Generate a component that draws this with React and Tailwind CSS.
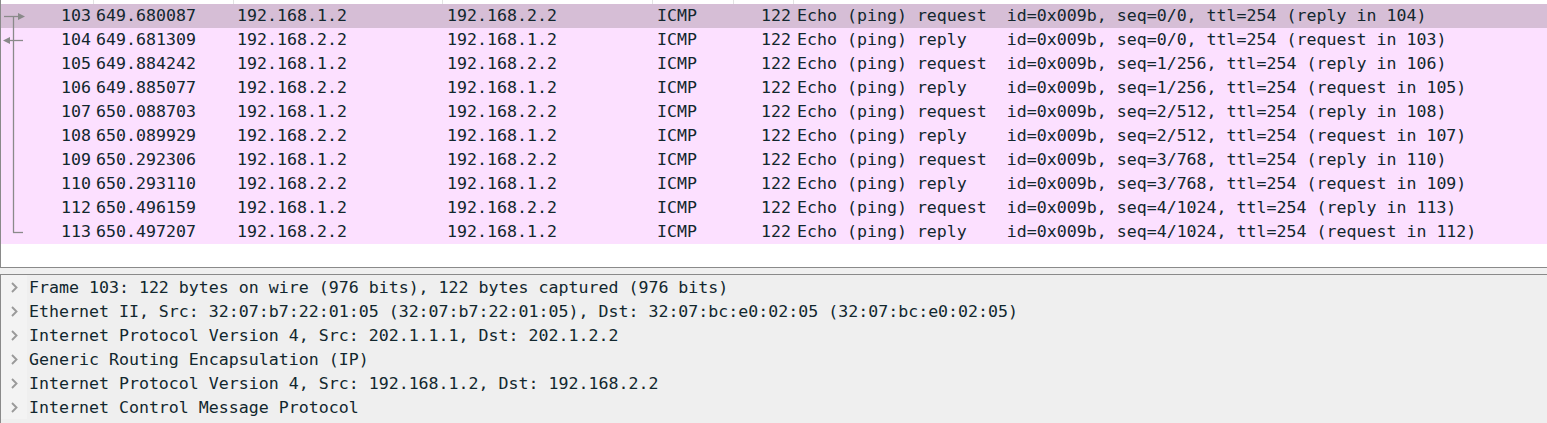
const packets = [
  { no: 103, time: '649.680087', src: '192.168.1.2', dst: '192.168.2.2', info: 'Echo (ping) request  id=0x009b, seq=0/0, ttl=254 (reply in 104)' },
  { no: 104, time: '649.681309', src: '192.168.2.2', dst: '192.168.1.2', info: 'Echo (ping) reply    id=0x009b, seq=0/0, ttl=254 (request in 103)' },
  { no: 105, time: '649.884242', src: '192.168.1.2', dst: '192.168.2.2', info: 'Echo (ping) request  id=0x009b, seq=1/256, ttl=254 (reply in 106)' },
  { no: 106, time: '649.885077', src: '192.168.2.2', dst: '192.168.1.2', info: 'Echo (ping) reply    id=0x009b, seq=1/256, ttl=254 (request in 105)' },
  { no: 107, time: '650.088703', src: '192.168.1.2', dst: '192.168.2.2', info: 'Echo (ping) request  id=0x009b, seq=2/512, ttl=254 (reply in 108)' },
  { no: 108, time: '650.089929', src: '192.168.2.2', dst: '192.168.1.2', info: 'Echo (ping) reply    id=0x009b, seq=2/512, ttl=254 (request in 107)' },
  { no: 109, time: '650.292306', src: '192.168.1.2', dst: '192.168.2.2', info: 'Echo (ping) request  id=0x009b, seq=3/768, ttl=254 (reply in 110)' },
  { no: 110, time: '650.293110', src: '192.168.2.2', dst: '192.168.1.2', info: 'Echo (ping) reply    id=0x009b, seq=3/768, ttl=254 (request in 109)' },
  { no: 112, time: '650.496159', src: '192.168.1.2', dst: '192.168.2.2', info: 'Echo (ping) request  id=0x009b, seq=4/1024, ttl=254 (reply in 113)' },
  { no: 113, time: '650.497207', src: '192.168.2.2', dst: '192.168.1.2', info: 'Echo (ping) reply    id=0x009b, seq=4/1024, ttl=254 (request in 112)' },
];

const details = [
  'Frame 103: 122 bytes on wire (976 bits), 122 bytes captured (976 bits)',
  'Ethernet II, Src: 32:07:b7:22:01:05 (32:07:b7:22:01:05), Dst: 32:07:bc:e0:02:05 (32:07:bc:e0:02:05)',
  'Internet Protocol Version 4, Src: 202.1.1.1, Dst: 202.1.2.2',
  'Generic Routing Encapsulation (IP)',
  'Internet Protocol Version 4, Src: 192.168.1.2, Dst: 192.168.2.2',
  'Internet Control Message Protocol',
];

const cols = 'grid grid-cols-[93px_140px_209px_210px_81px_60px_1fr]';

function RelatedMarks() {
  // packet relation lines drawn over the No. column
  return (
    <svg className="absolute left-0 top-0 pointer-events-none" width="30" height="250">
      <g stroke="#8a8a8a" strokeWidth="1.3" fill="#8a8a8a">
        <line x1="12.5" y1="16" x2="12.5" y2="232.5" />
        <line x1="12" y1="232.5" x2="22" y2="232.5" />
        <line x1="3" y1="16.5" x2="18" y2="16.5" />
        <polygon points="17,13 24,16.5 17,20" stroke="none" />
        <line x1="8" y1="40.5" x2="22" y2="40.5" />
        <polygon points="9,37 2,40.5 9,44" stroke="none" />
      </g>
    </svg>
  );
}

export default function App() {
  return (
    <div
      className="w-[1547px] h-[423px] bg-[#f0f0f0] overflow-hidden text-[#12272e]"
      style={{ fontFamily: '"DejaVu Sans Mono", "Liberation Mono", monospace' }}
    >
      <div className="relative h-[268px] bg-white border-l border-b border-[#8a8a8a] text-[16.6px] leading-[24px]">
        <div className={`${cols} h-[4px]`}>
          <div className="border-r border-[#e3e3e3]" />
          <div className="border-r border-[#e3e3e3]" />
          <div className="border-r border-[#e3e3e3]" />
          <div className="border-r border-[#e3e3e3]" />
          <div className="border-r border-[#e3e3e3]" />
          <div className="border-r border-[#e3e3e3]" />
          <div />
        </div>
        {packets.map((p, i) => (
          <div
            key={p.no}
            className={`${cols} h-[24px] whitespace-pre ${i === 0 ? 'bg-[#d6bed6]' : 'bg-[#fce0ff]'}`}
          >
            <div className="text-right pr-[3px]">{p.no}</div>
            <div className="pl-[2px]">{p.time}</div>
            <div className="pl-[3px]">{p.src}</div>
            <div className="pl-[4px]">{p.dst}</div>
            <div className="pl-[4px]">ICMP</div>
            <div className="text-right pr-[3px]">122</div>
            <div className="pl-[3px]">{p.info}</div>
          </div>
        ))}
        <RelatedMarks />
      </div>
      <div className="h-[6px]" />
      <div className="h-[149px] border-l border-t border-[#8a8a8a] bg-[#efefef] text-[16.6px] leading-[24px]">
        {details.map((d) => (
          <div key={d} className="flex h-[24px] whitespace-pre">
            <div className="w-[26px] flex items-center justify-center bg-[#f3f3f3]">
              <svg width="9" height="13" viewBox="0 0 9 13">
                <path d="M2 2 L6.5 6.5 L2 11" fill="none" stroke="#9a9a9a" strokeWidth="1.9" />
              </svg>
            </div>
            <div className="pl-[2px] pt-px">{d}</div>
          </div>
        ))}
      </div>
    </div>
  );
}
